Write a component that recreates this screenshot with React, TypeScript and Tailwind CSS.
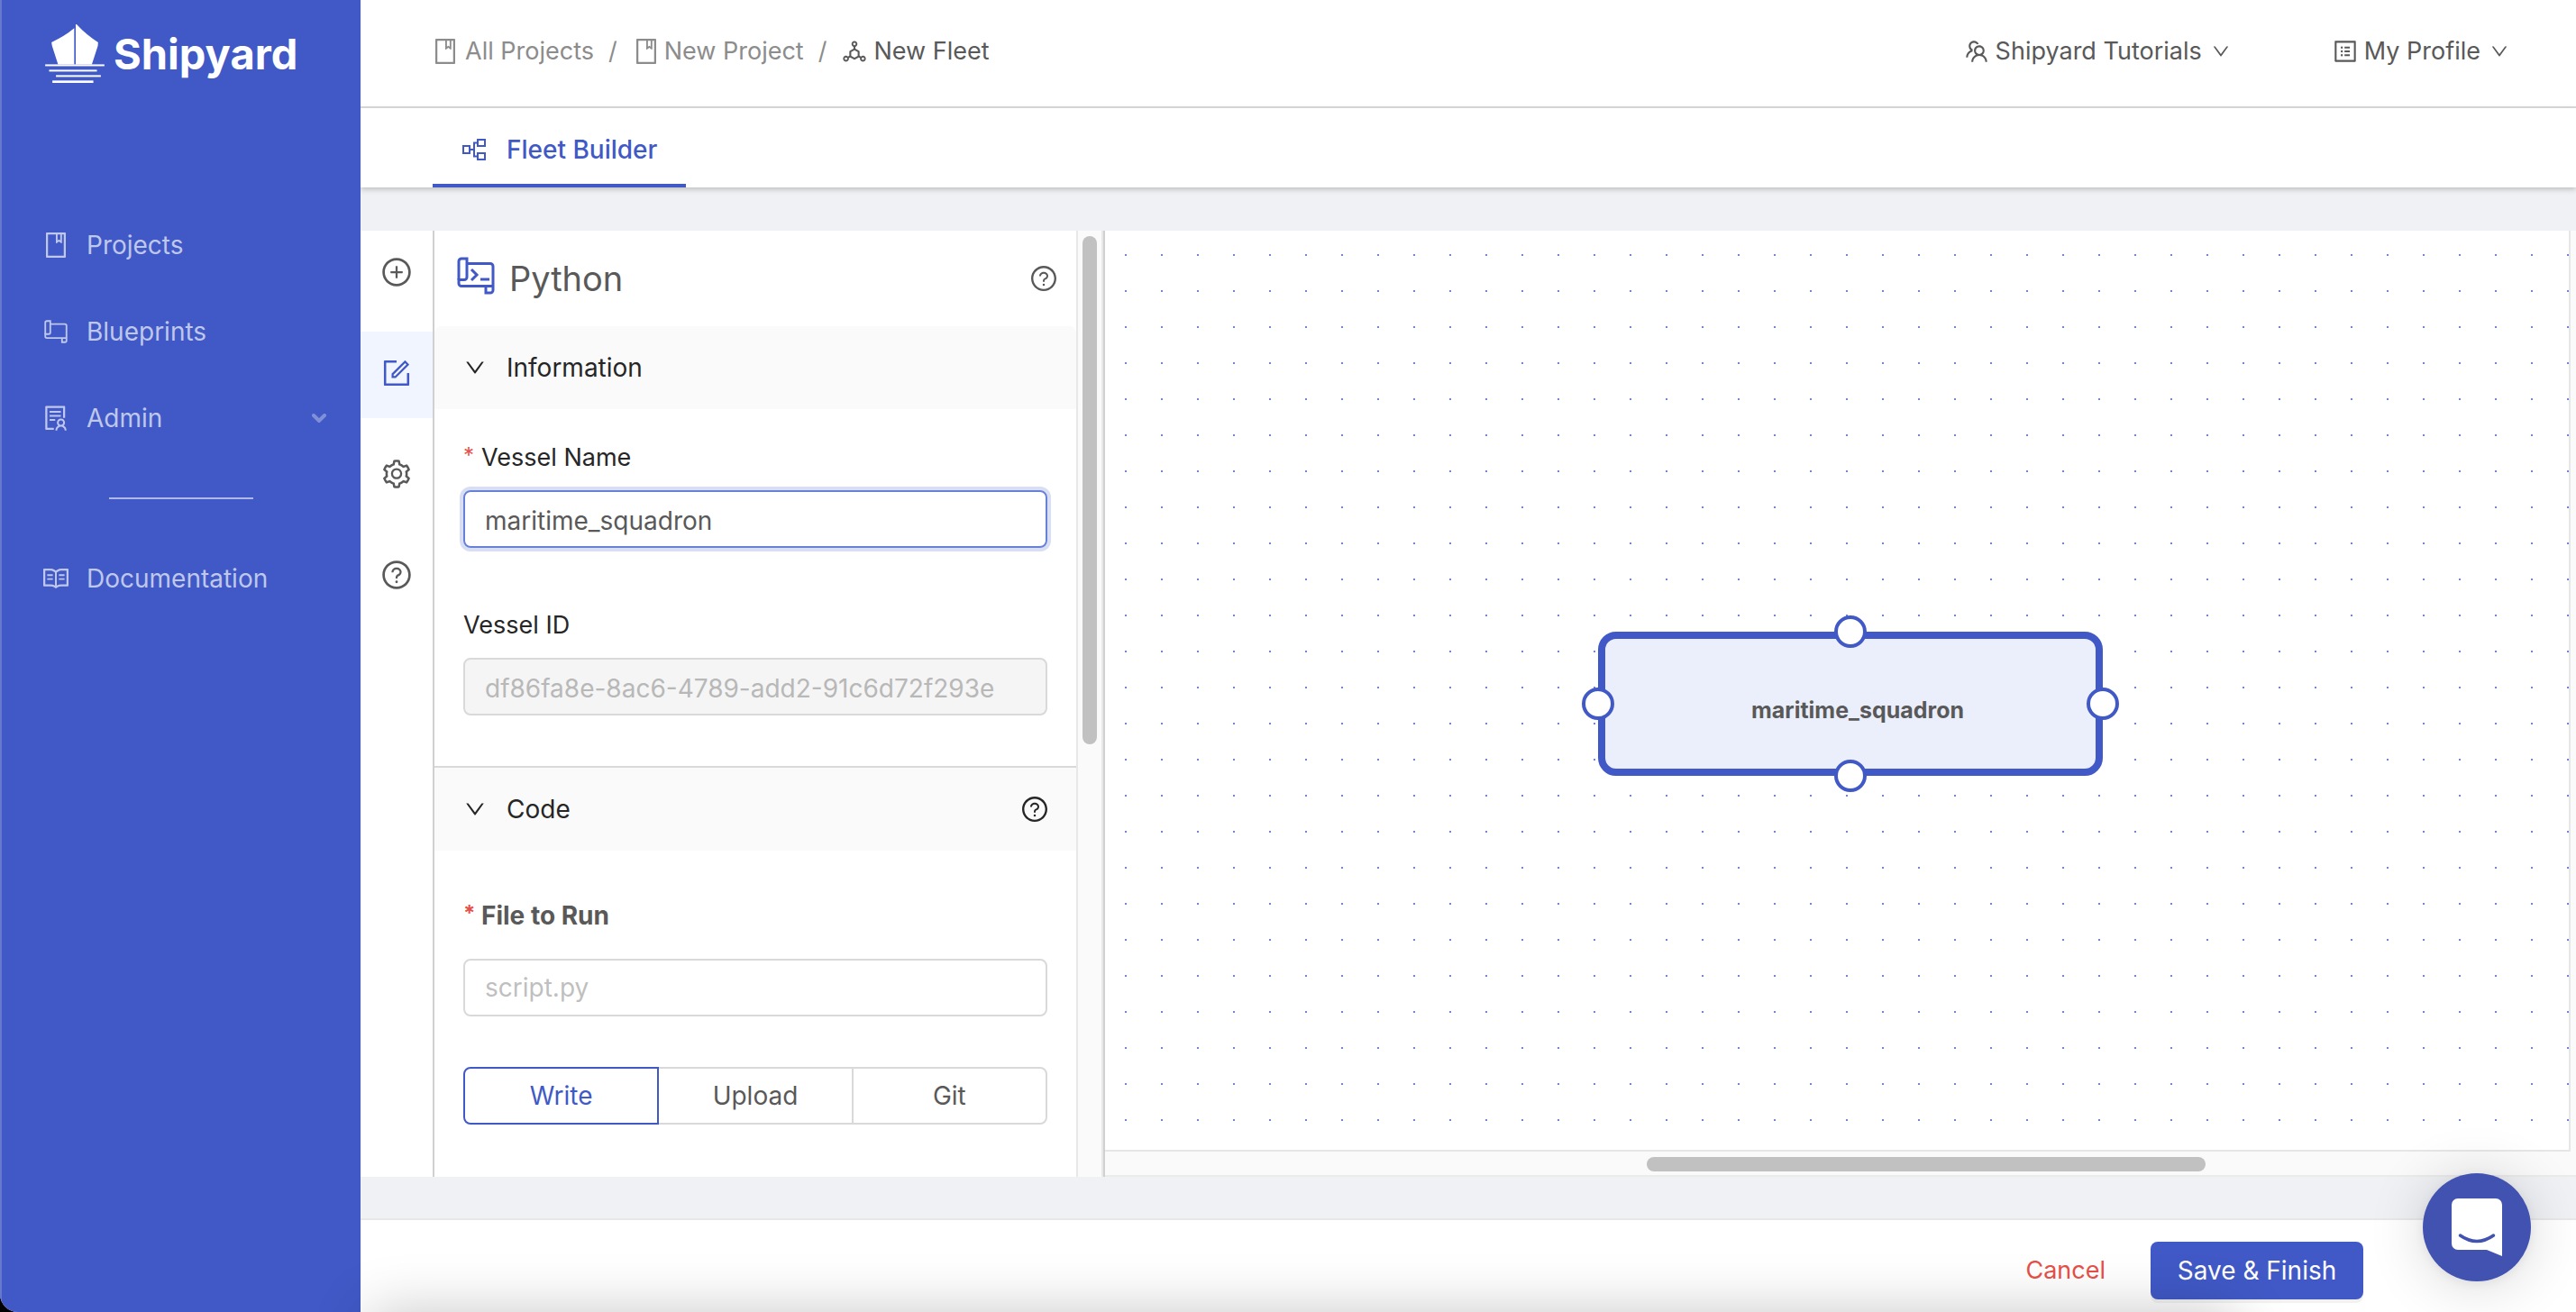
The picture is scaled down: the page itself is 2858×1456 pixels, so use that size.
import type { ReactNode } from "react";
import {
  AiOutlineBook,
  AiOutlineDeploymentUnit,
  AiOutlineDown,
  AiOutlineForm,
  AiOutlinePlusCircle,
  AiOutlineProfile,
  AiOutlineQuestionCircle,
  AiOutlineRead,
  AiOutlineSetting,
  AiOutlineSolution,
  AiOutlineTeam,
} from "react-icons/ai";

function ShipyardMark() {
  return (
    <svg viewBox="150 82 198 196" className="h-[65px] w-[66px]" fill="#fff" aria-hidden="true">
      <path d="M247 95 Q215 122 171 142 L173 154 L193 216 H247 Z" />
      <path d="M252 82 H255 Q287 117 327 142 L326 154 L306 216 H252 Z" />
      <rect x="150" y="216" width="198" height="6" />
      <rect x="163" y="234" width="160" height="6" />
      <rect x="186" y="252" width="150" height="6" />
      <rect x="174" y="270" width="137" height="8" />
    </svg>
  );
}

function ScrollIcon({ className, stroke, prompt }: { className: string; stroke: number; prompt?: boolean }) {
  return (
    <svg viewBox="0 0 42 42" className={className} fill="none" stroke="currentColor" strokeWidth={stroke} aria-hidden="true">
      <path d="M2 25.5 V5 a3 3 0 0 1 3-3 H11 V22.5 a3 3 0 0 1-3 3 H2" />
      <path d="M11 7.5 H37 a3 3 0 0 1 3 3 V37 a3 3 0 0 1-3 3 H32 V32.5" />
      <path d="M2 24 V29.5 a3 3 0 0 0 3 3 H40" />
      {prompt && <path d="M16 14 l6 6 -6 6 M26 25 H36" />}
    </svg>
  );
}

function PartitionIcon() {
  return (
    <svg viewBox="0 0 28 28" className="h-7 w-7 shrink-0" fill="none" stroke="currentColor" strokeWidth="2" aria-hidden="true">
      <rect x="2" y="10" width="7" height="8" />
      <rect x="18" y="3" width="8" height="7" />
      <rect x="18" y="18" width="8" height="7" />
      <path d="M9 14 H14 M18 6.5 H14 V21.5 H18" />
    </svg>
  );
}

function NavItem({ icon, label, trailing }: { icon: ReactNode; label: string; trailing?: ReactNode }) {
  return (
    <a href="#" className="flex h-24 items-center gap-[18px] pr-[38px] pl-11 text-[#bfc7ea]">
      <span className="flex w-8 justify-center text-[32px]">{icon}</span>
      <span className="flex-1">{label}</span>
      {trailing}
    </a>
  );
}

function Required() {
  return <span className="w-5 self-start text-[24px] leading-10 text-[#e5504a]" aria-hidden="true">*</span>;
}

function SectionBar({ title, className, trailing }: { title: string; className: string; trailing?: ReactNode }) {
  return (
    <div className={`flex items-center bg-[#fafafa] pr-[30px] pl-8 text-[#262626] ${className}`}>
      <button type="button" className="flex h-[92px] flex-1 items-center gap-[22px]" aria-expanded="true">
        <AiOutlineDown className="text-[26px]" />
        {title}
      </button>
      {trailing}
    </div>
  );
}

function RailButton({ label, active, children }: { label: string; active?: boolean; children: ReactNode }) {
  return (
    <button
      type="button"
      aria-label={label}
      className={`flex h-24 w-full items-center justify-center pb-1 text-[36px] ${active ? "bg-[#f0f5ff] text-[#4059c6]" : ""}`}
    >
      {children}
    </button>
  );
}

function Port({ className }: { className: string }) {
  return <span className={`absolute h-9 w-9 rounded-full border-4 border-[#4059c6] bg-white ${className}`} />;
}

function Sidebar() {
  return (
    <aside className="relative z-10 w-[400px] shrink-0 border-l-2 border-[#6579cf] bg-[#4059c6]">
      <div className="flex h-56 items-start gap-2.5 pt-[27px] pl-12">
        <ShipyardMark />
        <span className="pt-1.5 text-[47px] leading-[54px] font-bold text-white">Shipyard</span>
      </div>
      <nav>
        <NavItem icon={<AiOutlineBook />} label="Projects" />
        <NavItem icon={<ScrollIcon className="h-[26px] w-[26px]" stroke={3} />} label="Blueprints" />
        <NavItem
          icon={<AiOutlineSolution />}
          label="Admin"
          trailing={
            <svg viewBox="0 0 16 10" className="h-2.5 w-4" fill="none" stroke="#7f90d9" strokeWidth="4" strokeLinecap="round" aria-hidden="true">
              <path d="M2 2 L8 8 L14 2" />
            </svg>
          }
        />
        <hr className="mx-auto my-10 h-0.5 w-40 border-0 bg-[#b0b9e6]" />
        <NavItem icon={<AiOutlineRead />} label="Documentation" />
      </nav>
    </aside>
  );
}

function Header() {
  return (
    <header className="flex h-[120px] items-center justify-between border-b-2 border-[#d9dbda] bg-white pr-[74px] pb-1 pl-[78px] text-[27px]">
      <nav className="flex items-center text-[#8c8c8c]" aria-label="Breadcrumb">
        <a href="#" className="flex items-center gap-1.5">
          <AiOutlineBook className="text-[32px]" />
          All Projects
        </a>
        <span className="mx-4">/</span>
        <a href="#" className="flex items-center gap-1">
          <AiOutlineBook className="text-[32px]" />
          New Project
        </a>
        <span className="mx-4">/</span>
        <span className="flex items-center gap-1.5 text-[#595959]">
          <AiOutlineDeploymentUnit className="text-[30px]" />
          New Fleet
        </span>
      </nav>
      <div className="flex items-center gap-28">
        <button type="button" className="flex items-center gap-1.5">
          <AiOutlineTeam className="text-[30px]" />
          Shipyard Tutorials
          <AiOutlineDown className="ml-1 text-[22px]" />
        </button>
        <button type="button" className="flex items-center gap-1.5">
          <AiOutlineProfile className="text-[30px]" />
          My Profile
          <AiOutlineDown className="ml-1 text-[22px]" />
        </button>
      </div>
    </header>
  );
}

const inputBox = "h-16 w-full rounded-lg border-2 px-[22px] outline-none";

function VesselForm() {
  return (
    <form className="flex w-[712px] shrink-0 flex-col overflow-hidden">
      <div className="flex h-[106px] shrink-0 items-center pr-5 pl-[25px]">
        <ScrollIcon className="mb-1.5 h-[42px] w-[42px] text-[#4059c6]" stroke={3} prompt />
        <h1 className="flex-1 pl-4 text-[38px] leading-[48px]">Python</h1>
        <button type="button" aria-label="Python help" className="text-[32px]">
          <AiOutlineQuestionCircle />
        </button>
      </div>

      <SectionBar title="Information" className="rounded-t-lg" />
      <div className="px-8 pt-8 pb-14">
        <label htmlFor="vessel-name" className="mb-3.5 flex text-[27px] leading-[44px] text-[#262626]">
          <Required />
          Vessel Name
        </label>
        <input
          id="vessel-name"
          defaultValue="maritime_squadron"
          className={`${inputBox} border-[#6880d6] pt-1 shadow-[0_0_0_4px_#d8def3]`}
        />
        <label htmlFor="vessel-id" className="mt-16 mb-3.5 flex text-[27px] leading-[44px] text-[#262626]">
          Vessel ID
        </label>
        <input
          id="vessel-id"
          disabled
          defaultValue="df86fa8e-8ac6-4789-add2-91c6d72f293e"
          className={`${inputBox} border-[#d9d9d9] bg-[#f5f5f5] pt-1 text-[#b8b8b8]`}
        />
      </div>

      <SectionBar
        title="Code"
        className="border-t-2 border-[#d9d9d9]"
        trailing={
          <button type="button" aria-label="Code help" className="text-[32px]">
            <AiOutlineQuestionCircle />
          </button>
        }
      />
      <div className="px-8 pt-[50px]">
        <label htmlFor="file-to-run" className="mb-[26px] flex leading-[44px] font-bold">
          <Required />
          File to Run
        </label>
        <input id="file-to-run" placeholder="script.py" className={`${inputBox} border-[#d9d9d9] placeholder:text-[#bfbfbf]`} />
        <div className="mt-14 flex h-16">
          <button type="button" className="relative z-10 flex-1 rounded-l-lg border-2 border-[#4059c6] text-[#4059c6]">
            Write
          </button>
          <button type="button" className="-ml-0.5 flex-1 border-2 border-[#d9d9d9]">
            Upload
          </button>
          <button type="button" className="-ml-0.5 flex-1 rounded-r-lg border-2 border-[#d9d9d9]">
            Git
          </button>
        </div>
      </div>
    </form>
  );
}

function Canvas() {
  return (
    <section className="flex min-w-0 flex-1 flex-col">
      <div className="flex min-h-0 flex-1">
        <div className="relative min-w-0 flex-1 overflow-hidden border-r-2 border-b-2 border-[#e6e6e6]">
          <svg className="h-full w-full" aria-hidden="true">
            <pattern id="dots" x="22" y="26" width="40" height="40" patternUnits="userSpaceOnUse">
              <rect width="2" height="2" fill="#6f86d1" />
            </pattern>
            <rect width="100%" height="100%" fill="url(#dots)" />
          </svg>
          <div className="absolute top-[445px] left-[547px] flex h-40 w-[560px] items-center justify-center rounded-[20px] border-8 border-[#4059c6] bg-[#ebeffc] pt-3.5 pl-4 text-[25px] font-bold">
            maritime_squadron
            <Port className="-top-[26px] left-[254px]" />
            <Port className="-bottom-[26px] left-[254px]" />
            <Port className="top-[54px] -left-[26px]" />
            <Port className="top-[54px] -right-[26px]" />
          </div>
        </div>
        <div className="w-1.5 bg-[#fafafa]" />
      </div>
      <div className="flex h-7 justify-center border-b-2 border-[#ebebeb] bg-[#fafafa] pt-1.5 pl-[190px]">
        <div className="h-4 w-[43%] rounded-full bg-[#c1c1c1]" />
      </div>
    </section>
  );
}

export default function App() {
  return (
    <div className="h-screen bg-black">
      <div className="relative flex h-full overflow-hidden rounded-bl-[20px] bg-[#eff1f5] font-[Inter,sans-serif] text-[28px] leading-9 text-[#595959]">
        <Sidebar />
        <main className="flex min-w-0 flex-1 flex-col">
          <Header />
          <div className="flex h-[88px] shrink-0 bg-white pl-20 shadow-[0_2px_6px_#b9bcb9]">
            <a href="#" className="flex items-center gap-[22px] border-b-4 border-[#4059c6] px-8 pt-2 font-medium text-[#4059c6]">
              <PartitionIcon />
              Fleet Builder
            </a>
          </div>

          <div className="mt-12 mb-[46px] flex min-h-0 flex-1 bg-white">
            <div className="flex w-[82px] shrink-0 flex-col gap-4 border-r-2 border-[#d0d0d0]">
              <RailButton label="Add vessel">
                <AiOutlinePlusCircle />
              </RailButton>
              <RailButton label="Edit vessel" active>
                <AiOutlineForm />
              </RailButton>
              <RailButton label="Settings">
                <AiOutlineSetting />
              </RailButton>
              <RailButton label="Help">
                <AiOutlineQuestionCircle />
              </RailButton>
            </div>
            <VesselForm />
            <div className="flex w-[30px] shrink-0 justify-center border-x-2 border-[#e8e8e8] bg-[#fafafa] pt-1.5">
              <div className="h-[564px] w-4 rounded-full bg-[#c1c1c1]" />
            </div>
            <div className="w-0.5 shrink-0 bg-[#d0d0d0]" />
            <Canvas />
          </div>

          <footer className="flex h-[104px] shrink-0 items-start justify-end gap-[26px] border-t-2 border-[#e8e8e8] bg-white pt-6 pr-[236px]">
            <button type="button" className="h-16 px-6 text-[27px] text-[#e5504a]">
              Cancel
            </button>
            <button type="button" className="h-16 w-[236px] rounded-lg bg-[#4059c6] text-[28px] text-white shadow-[0_4px_0_#0000000d]">
              Save &amp; Finish
            </button>
          </footer>
        </main>

        <div className="pointer-events-none absolute top-full right-[380px] left-[410px] z-20 h-20 shadow-[0_0_64px_#00000038]" />

        <button
          type="button"
          aria-label="Open chat"
          className="absolute right-[50px] bottom-[34px] flex h-[120px] w-[120px] items-center justify-center rounded-full bg-[#4252b0] shadow-[0_2px_12px_#00000010,0_4px_64px_#00000029]"
        >
          <svg viewBox="0 0 56 64" className="h-16 w-14" aria-hidden="true">
            <path d="M7 0 H49 a7 7 0 0 1 7 7 V64 L39 57 H7 a7 7 0 0 1-7-7 V7 a7 7 0 0 1 7-7 Z" fill="#fff" />
            <path d="M9.500 41 Q28 54 46.500 41" fill="none" stroke="#4252b0" strokeWidth="3.500" strokeLinecap="round" />
          </svg>
        </button>
      </div>
    </div>
  );
}
